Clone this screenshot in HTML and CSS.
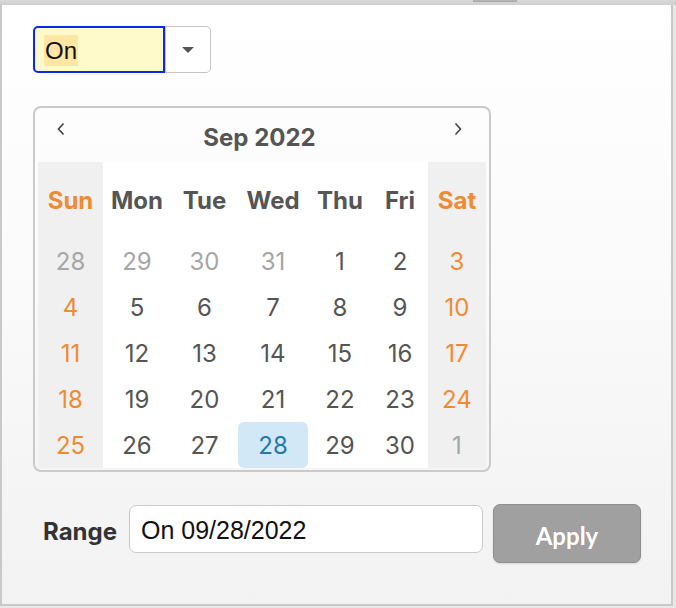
FILE: index.html
```html
<!DOCTYPE html>
<html>
<head>
<meta charset="utf-8">
<link rel="stylesheet" href="styles.css">
</head>
<body>
<div class="topstrip"><div class="tab"></div></div>
<div class="panel">
  <div class="select">
    <div class="select-input"><span class="sel-text">On</span></div>
    <div class="select-btn"><svg width="14" height="8" viewBox="0 0 14 8"><path d="M1 1 H13 L7 7 Z" fill="#555"/></svg></div>
  </div>

  <div class="calendar">
    <div class="cal-head">
      <span class="nav"><svg width="10" height="14" viewBox="0 0 10 14"><path d="M7.5 1.5 L2.5 7 L7.5 12.5" fill="none" stroke="#444" stroke-width="1.6"/></svg></span>
      <span class="month">Sep 2022</span>
      <span class="nav"><svg width="10" height="14" viewBox="0 0 10 14"><path d="M2.5 1.5 L7.5 7 L2.5 12.5" fill="none" stroke="#444" stroke-width="1.6"/></svg></span>
    </div>
    <div class="grid">
      <div class="dn we">Sun</div><div class="dn">Mon</div><div class="dn">Tue</div><div class="dn">Wed</div><div class="dn">Thu</div><div class="dn">Fri</div><div class="dn we">Sat</div>

      <div class="d we other">28</div><div class="d other">29</div><div class="d other">30</div><div class="d other">31</div><div class="d">1</div><div class="d">2</div><div class="d we wk">3</div>
      <div class="d we wk">4</div><div class="d">5</div><div class="d">6</div><div class="d">7</div><div class="d">8</div><div class="d">9</div><div class="d we wk">10</div>
      <div class="d we wk">11</div><div class="d">12</div><div class="d">13</div><div class="d">14</div><div class="d">15</div><div class="d">16</div><div class="d we wk">17</div>
      <div class="d we wk">18</div><div class="d">19</div><div class="d">20</div><div class="d">21</div><div class="d">22</div><div class="d">23</div><div class="d we wk">24</div>
      <div class="d we wk">25</div><div class="d">26</div><div class="d">27</div><div class="d sel">28</div><div class="d">29</div><div class="d">30</div><div class="d we other">1</div>
    </div>
  </div>

  <div class="range">
    <span class="range-label">Range</span>
    <div class="range-input">On 09/28/2022</div>
    <button class="apply">Apply</button>
  </div>
</div>
</body>
</html>
```

FILE: styles.css
```css
html, body {
  margin: 0;
  padding: 0;
}
body {
  width: 676px;
  height: 608px;
  background: #e8e8e8;
  overflow: hidden;
  font-family: "Inter", "Liberation Sans", sans-serif;
}
.topstrip {
  height: 5px;
  background: linear-gradient(#d8d8d8, #cfcfcf);
  position: relative;
}
.tab {
  position: absolute;
  left: 473px;
  top: 0;
  width: 42px;
  height: 1px;
  background: #b4b4b4;
  border: 1px solid #a8a8a8;
  border-top: none;
}
.panel {
  box-sizing: border-box;
  width: 673px;
  height: 601px;
  border: 2px solid #c9c9c9;
  border-top: none;
  background: linear-gradient(#ffffff 0%, #fbfbfb 40%, #f2f2f2 100%);
  padding: 21px 0 0 31px;
}
.select {
  display: flex;
  height: 47px;
}
.select-input {
  box-sizing: border-box;
  width: 132px;
  height: 47px;
  border: 2px solid #0a28f0;
  border-radius: 5px 0 0 5px;
  background: #fffac9;
  display: flex;
  align-items: center;
  padding-left: 9px;
  padding-top: 2px;
  font-family: "Liberation Sans", Arial, sans-serif;
  font-size: 24px;
  color: #111;
}
.sel-text {
  background: #ffe6a3;
  padding: 4px 1px 3px 1px;
  line-height: 24px;
}
.select-btn {
  box-sizing: border-box;
  width: 46px;
  height: 47px;
  background: #fff;
  border: 1px solid #c4c4c4;
  border-left: 1px solid #c8c8c8;
  border-radius: 0 5px 5px 0;
  display: flex;
  align-items: center;
  justify-content: center;
}
.calendar {
  box-sizing: border-box;
  margin-top: 33px;
  width: 458px;
  height: 366px;
  border: 2px solid #cacaca;
  border-radius: 8px;
  padding: 0 3px 2px 3px;
}
.cal-head {
  height: 54px;
  display: flex;
  align-items: flex-start;
  justify-content: space-between;
  padding: 0 23px 0 18px;
}
.nav {
  margin-top: 14px;
  display: flex;
}
.month {
  margin-top: 15px;
  font-size: 24px;
  font-weight: 700;
  color: #555;
}
.grid {
  display: grid;
  grid-template-columns: 65px 68px 67px 70px 64px 56px 58px;
  grid-template-rows: 76px repeat(5, 46px);
  background: #fff;
}
.dn, .d {
  display: flex;
  align-items: center;
  justify-content: center;
  color: #555;
}
.dn {
  font-size: 24px;
  font-weight: 700;
}
.d {
  font-size: 24px;
}
.we {
  background: #f0f0f0;
}
.dn.we, .d.wk {
  color: #f08b32;
}
.d.other {
  color: #a6a6a6;
}
.d.sel {
  background: #d3e8f6;
  border-radius: 6px;
  color: #2479a8;
}
.range {
  display: flex;
  align-items: flex-start;
  margin-top: 32px;
  padding-left: 10px;
}
.range-label {
  margin-top: 13px;
  font-family: "Inter", "Liberation Sans", sans-serif;
  font-weight: 700;
  font-size: 24px;
  color: #333;
  width: 86px;
}
.range-input {
  box-sizing: border-box;
  margin-top: 1px;
  width: 354px;
  height: 48px;
  background: #fff;
  border: 1px solid #c9c9c9;
  border-radius: 7px;
  padding-left: 11px;
  padding-top: 3px;
  display: flex;
  align-items: center;
  font-family: "Liberation Sans", Arial, sans-serif;
  font-size: 25px;
  color: #111;
}
.apply {
  box-sizing: border-box;
  margin-left: 10px;
  width: 148px;
  height: 59px;
  background: #a0a0a0;
  border: 1px solid #8e8e8e;
  border-radius: 7px;
  color: #fff;
  font-family: "Lato", "Liberation Sans", sans-serif;
  font-weight: 700;
  font-size: 24px;
  padding: 3px 0 0 0;
  box-shadow: 0 1px 2px rgba(0,0,0,0.12);
}
```
